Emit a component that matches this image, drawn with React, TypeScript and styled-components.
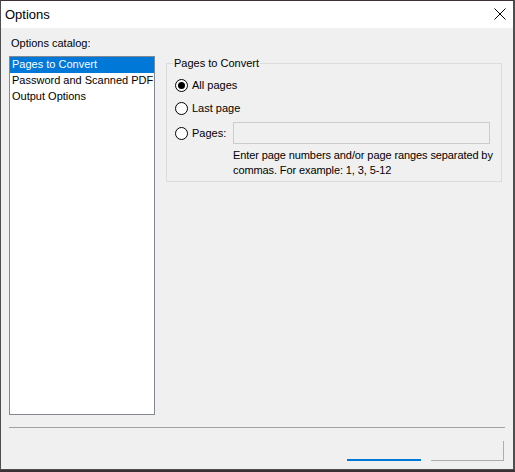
import React from 'react';
import styled, { createGlobalStyle } from 'styled-components';

const GlobalStyle = createGlobalStyle`
    html, body {
        margin: 0;
        padding: 0;
        background: #3b3134;
    }
    body {
        font-family: "Liberation Sans", Arial, sans-serif;
        font-size: 11px;
        color: #000;
    }
`;

const Window = styled.div`
    width: 515px;
    height: 470px;
    box-sizing: border-box;
    border-top: 1px solid #3b3134;
    border-left: 1px solid #4e4e4e;
    border-right: 2px solid #4e4e4e;
    border-bottom: 1px solid #4e4e4e;
    display: flex;
    flex-direction: column;
    background: #f0f0f0;
`;

const TitleBar = styled.div`
    height: 27px;
    background: #fff;
    display: flex;
    align-items: center;
    justify-content: space-between;
    padding: 0 6px 0 4px;
`;

const Title = styled.span`
    font-size: 13px;
    line-height: 16px;
`;

const CloseButton = styled.button`
    width: 14px;
    height: 14px;
    padding: 0;
    border: none;
    background: transparent;
    display: flex;
    align-items: center;
    justify-content: center;
    margin-top: -2px;
`;

const Client = styled.div`
    flex: 1;
    display: flex;
    flex-direction: column;
    padding: 8px 8px 0 8px;
`;

const Label = styled.div`
    line-height: 15px;
    padding-left: 2px;
`;

const MainRow = styled.div`
    display: flex;
    align-items: flex-start;
    margin-top: 5px;
`;

const ListBox = styled.ul`
    list-style: none;
    margin: 0;
    padding: 0;
    width: 146px;
    height: 359px;
    box-sizing: border-box;
    border: 1px solid #828790;
    background: #fff;
`;

const ListItem = styled.li<{ $selected?: boolean }>`
    height: 16px;
    line-height: 15px;
    padding-left: 2px;
    white-space: nowrap;
    background: ${p => (p.$selected ? '#0078d7' : 'transparent')};
    color: ${p => (p.$selected ? '#fff' : '#000')};
`;

const GroupBox = styled.fieldset`
    flex: 1;
    margin: 0 3px 0 11px;
    min-width: 0;
    border: 1px solid #dcdcdc;
    padding: 0 0 3px 8px;
`;

const Legend = styled.legend`
    line-height: 15px;
    padding: 0 1px;
    margin-left: -2px;
`;

const OptionRow = styled.div<{ $gap: number }>`
    display: flex;
    align-items: center;
    margin-top: ${p => p.$gap}px;
    min-height: 16px;
`;

const RadioCircle = styled.span<{ $checked?: boolean }>`
    width: 13px;
    height: 13px;
    box-sizing: border-box;
    border: 1px solid #000;
    border-radius: 50%;
    background: #fff;
    display: flex;
    align-items: center;
    justify-content: center;
    flex-shrink: 0;

    &::after {
        content: '';
        width: 7px;
        height: 7px;
        border-radius: 50%;
        background: ${p => (p.$checked ? '#000' : 'transparent')};
    }
`;

const RadioLabel = styled.span<{ $width?: number }>`
    margin-left: 4px;
    line-height: 15px;
    width: ${p => (p.$width ? `${p.$width}px` : 'auto')};
`;

const PagesInput = styled.input`
    width: 257px;
    height: 22px;
    box-sizing: border-box;
    border: 1px solid #cccccc;
    background: #f0f0f0;
    margin: 0;
    padding: 0 3px;
    font: inherit;
`;

const HelpText = styled.p`
    margin: 4px 0 0 58px;
    line-height: 15px;
    width: 268px;
    letter-spacing: -0.1px;
`;

const Separator = styled.div`
    height: 1px;
    background: #a0a0a0;
    margin-top: 12px;
`;

const ButtonRow = styled.div`
    display: flex;
    justify-content: flex-end;
    gap: 10px;
    padding-top: 13px;
    margin-right: 1px;
`;

const DialogButton = styled.button<{ $default?: boolean }>`
    width: ${p => (p.$default ? 74 : 73)}px;
    height: 20px;
    padding: 0;
    background: transparent;
    border: none;
    border-bottom: ${p => (p.$default ? '2px solid #0078d7' : '1px solid #adadad')};
    border-right: ${p => (p.$default ? 'none' : '1px solid #adadad')};
`;

const catalog = ['Pages to Convert', 'Password and Scanned PDF', 'Output Options'];

const App = () => {
    return (
        <>
            <GlobalStyle />
            <Window>
                <TitleBar>
                    <Title>Options</Title>
                    <CloseButton aria-label="Close">
                        <svg width="12" height="12" viewBox="0 0 12 12">
                            <path d="M0.5 0.5 L11.5 11.5 M11.5 0.5 L0.5 11.5" stroke="#000" strokeWidth="1" />
                        </svg>
                    </CloseButton>
                </TitleBar>
                <Client>
                    <Label>Options catalog:</Label>
                    <MainRow>
                        <ListBox>
                            {catalog.map((item, i) => (
                                <ListItem key={item} $selected={i === 0}>{item}</ListItem>
                            ))}
                        </ListBox>
                        <GroupBox>
                            <Legend>Pages to Convert</Legend>
                            <OptionRow $gap={6}>
                                <RadioCircle $checked />
                                <RadioLabel>All pages</RadioLabel>
                            </OptionRow>
                            <OptionRow $gap={7}>
                                <RadioCircle />
                                <RadioLabel>Last page</RadioLabel>
                            </OptionRow>
                            <OptionRow $gap={6}>
                                <RadioCircle />
                                <RadioLabel $width={41}>Pages:</RadioLabel>
                                <PagesInput disabled />
                            </OptionRow>
                            <HelpText>
                                Enter page numbers and/or page ranges separated by commas. For example: 1, 3, 5-12
                            </HelpText>
                        </GroupBox>
                    </MainRow>
                    <Separator />
                    <ButtonRow>
                        <DialogButton $default />
                        <DialogButton />
                    </ButtonRow>
                </Client>
            </Window>
        </>
    );
};

export default App;
